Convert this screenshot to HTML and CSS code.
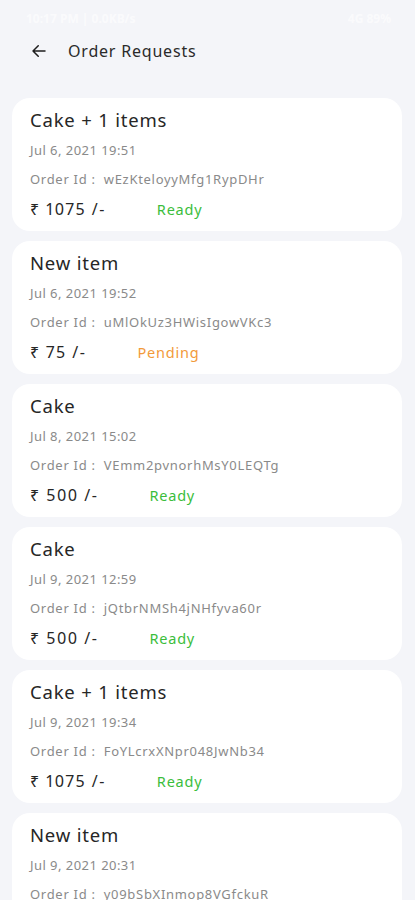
FILE: index.html
```html
<!DOCTYPE html>
<html lang="en">
  <head>
    <meta charset="UTF-8" />
    <meta name="viewport" content="width=device-width, initial-scale=1.0" />
    <title>Order Requests</title>
    <link rel="stylesheet" href="styles.css">
  </head>

  <body>
    <div class="statusbar">
      <span>10:17 PM | 0.0KB/s</span>
      <span>4G 89%</span>
    </div>

    <div class="header">
      <svg class="back" width="18" height="18" viewBox="0 0 24 24">
        <path d="M20 12H4M11 5l-7 7 7 7" fill="none" stroke="#1e1e1e" stroke-width="2" stroke-linecap="round" stroke-linejoin="round"/>
      </svg>
      <span class="title">Order Requests</span>
    </div>

    <div class="list">
      <div class="card">
        <div class="name">Cake + 1 items</div>
        <div class="meta date">Jul 6, 2021 19:51</div>
        <div class="meta">Order Id :&nbsp; wEzKteloyyMfg1RypDHr</div>
        <div class="row">
          <span class="price">₹ 1075 /-</span>
          <span class="status ready">Ready</span>
        </div>
      </div>

      <div class="card">
        <div class="name">New item</div>
        <div class="meta date">Jul 6, 2021 19:52</div>
        <div class="meta">Order Id :&nbsp; uMlOkUz3HWisIgowVKc3</div>
        <div class="row">
          <span class="price">₹ 75 /-</span>
          <span class="status pending">Pending</span>
        </div>
      </div>

      <div class="card">
        <div class="name">Cake</div>
        <div class="meta date">Jul 8, 2021 15:02</div>
        <div class="meta">Order Id :&nbsp; VEmm2pvnorhMsY0LEQTg</div>
        <div class="row">
          <span class="price">₹ 500 /-</span>
          <span class="status ready">Ready</span>
        </div>
      </div>

      <div class="card">
        <div class="name">Cake</div>
        <div class="meta date">Jul 9, 2021 12:59</div>
        <div class="meta">Order Id :&nbsp; jQtbrNMSh4jNHfyva60r</div>
        <div class="row">
          <span class="price">₹ 500 /-</span>
          <span class="status ready">Ready</span>
        </div>
      </div>

      <div class="card">
        <div class="name">Cake + 1 items</div>
        <div class="meta date">Jul 9, 2021 19:34</div>
        <div class="meta">Order Id :&nbsp; FoYLcrxXNpr048JwNb34</div>
        <div class="row">
          <span class="price">₹ 1075 /-</span>
          <span class="status ready">Ready</span>
        </div>
      </div>

      <div class="card">
        <div class="name">New item</div>
        <div class="meta date">Jul 9, 2021 20:31</div>
        <div class="meta">Order Id :&nbsp; y09bSbXInmop8VGfckuR</div>
        <div class="row">
          <span class="price">₹ 500 /-</span>
          <span class="status ready">Ready</span>
        </div>
      </div>
    </div>
  </body>
</html>
```

FILE: styles.css
```css
body {
  margin: 0;
  background: #f4f5f9;
  font-family: "Noto Sans", "DejaVu Sans", sans-serif;
  color: #2a2a2a;
  height: 900px;
  overflow: hidden;
}

.statusbar {
  display: flex;
  justify-content: space-between;
  height: 36px;
  padding: 0 24px 0 26px;
  align-items: center;
  font-size: 12px;
  font-weight: 700;
  color: rgba(255, 255, 255, 0.6);
}

.header {
  display: flex;
  align-items: center;
  height: 30px;
  padding-left: 30px;
}

.back {
  margin-right: 20px;
}

.title {
  font-size: 16px;
  letter-spacing: 0.8px;
  color: #2a2a2a;
}

.list {
  display: flex;
  flex-direction: column;
  gap: 10px;
  padding: 32px 13px 0 12px;
}

.card {
  background: #ffffff;
  border-radius: 18px;
  padding: 10px 18px 7px;
}

.name {
  font-size: 18.5px;
  letter-spacing: 0.8px;
  line-height: 24px;
  margin-bottom: 4px;
  color: #262626;
}

.meta {
  font-size: 13px;
  letter-spacing: 0.7px;
  line-height: 29px;
  color: #8a8a8a;
}

.date {
  letter-spacing: 0.45px;
}

.row {
  display: flex;
  align-items: center;
  height: 30px;
}

.price {
  font-size: 16px;
  letter-spacing: 1.5px;
  font-variant-numeric: proportional-nums;
  color: #262626;
}

.status {
  font-size: 14.5px;
  letter-spacing: 0.8px;
  margin-left: 51px;
}

.ready {
  color: #3bbd3b;
}

.pending {
  color: #f29a3a;
}
```
